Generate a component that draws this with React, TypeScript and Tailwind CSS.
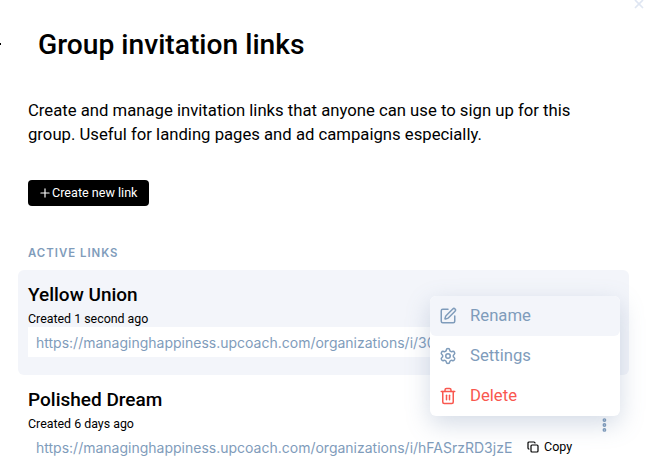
import { Copy, EllipsisVertical, Plus, Settings, SquarePen, Trash2, X } from 'lucide-react'

const links = [
  {
    name: 'Yellow Union',
    created: 'Created 1 second ago',
    url: 'https://managinghappiness.upcoach.com/organizations/i/30',
    active: true,
  },
  {
    name: 'Polished Dream',
    created: 'Created 6 days ago',
    url: 'https://managinghappiness.upcoach.com/organizations/i/hFASrzRD3jzE',
    active: false,
  },
]

function LinkRow({ link }: { link: (typeof links)[number] }) {
  return (
    <div className={`ml-[18px] w-[611px] h-[105px] rounded-md pl-2.5 pr-4 pt-[13px] ${link.active ? 'bg-[#f3f5fa]' : 'bg-white'}`}>
      <h3 className="text-[19px] leading-6 font-medium text-black font-['Roboto',sans-serif]">{link.name}</h3>
      <p className="mt-[4px] text-[12.4px] leading-4 text-black font-['Roboto',sans-serif]">{link.created}</p>
      <div className={`h-[30px] flex items-center ${link.active ? 'bg-white' : ''}`}>
        <span
          className={`ml-2 shrink-0 text-[14px] text-[#7f9cbb] whitespace-nowrap font-['Inter',sans-serif] ${link.active ? '' : 'w-[491px]'}`}
        >
          {link.url}
        </span>
        {!link.active && (
          <>
            <span className="flex items-center gap-[5px] text-[12.5px] text-black font-['Roboto',sans-serif]">
              <Copy size={12} strokeWidth={2.4} />
              Copy
            </span>
            <EllipsisVertical size={26} strokeWidth={3.4} className="ml-[24px] -mt-[44px] text-[#7f9cbb]" />
          </>
        )}
      </div>
    </div>
  )
}

export default function App() {
  return (
    <div className="relative w-[647px] h-[475px] overflow-hidden bg-white font-['Roboto',sans-serif]">
      <X size={14} strokeWidth={3} className="absolute right-[1px] -top-[3px] text-[#dfe6f2]" />
      <div className="absolute -left-[2px] top-[43px] w-[3px] h-[2px] bg-black" />

      <h1 className="pl-[38px] pt-[29px] text-[28.2px] leading-8 font-medium text-black">Group invitation links</h1>

      <p className="ml-[28px] mt-[38px] w-[590px] text-[16.7px] leading-6 text-black">
        Create and manage invitation links that anyone can use to sign up for this
        <br />
        group. Useful for landing pages and ad campaigns especially.
      </p>

      <button
        type="button"
        className="ml-[28px] mt-[33px] h-[26px] w-[121px] flex items-center pl-[10px] rounded bg-black text-[12.6px] text-white"
      >
        <Plus size={14} />
        Create new link
      </button>

      <div className="ml-[28px] mt-[39px] text-[11.4px] leading-4 font-semibold tracking-[1px] text-[#7f9cbb] font-['Inter',sans-serif]">
        ACTIVE LINKS
      </div>

      <div className="mt-[9px]">
        {links.map((link) => (
          <LinkRow key={link.name} link={link} />
        ))}
      </div>

      <div className="absolute left-[430px] top-[296px] w-[190px] rounded-md bg-white shadow-[0_8px_24px_rgba(100,125,165,0.28)] text-[16.7px]">
        <div className="h-10 flex items-center gap-[13px] pl-[9px] rounded-md bg-[#f3f5fa] text-[#7f9cbb]">
          <SquarePen size={18} />
          Rename
        </div>
        <div className="h-10 flex items-center gap-[13px] pl-[9px] text-[#7f9cbb]">
          <Settings size={18} />
          Settings
        </div>
        <div className="h-10 flex items-center gap-[13px] pl-[9px] text-[#f9574f]">
          <Trash2 size={18} />
          Delete
        </div>
      </div>
    </div>
  )
}
